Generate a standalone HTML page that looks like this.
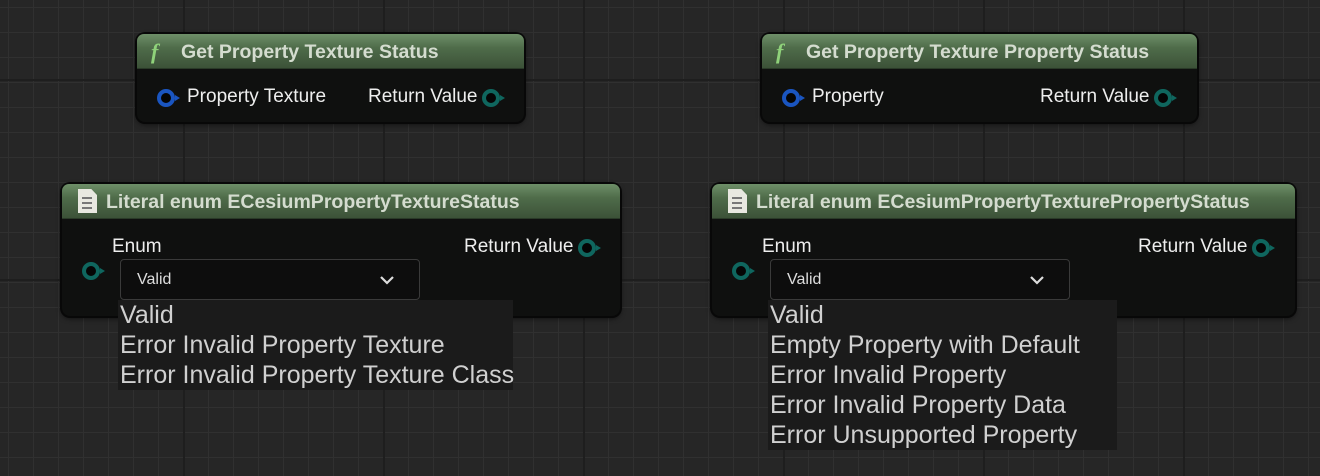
<!DOCTYPE html>
<html><head><meta charset="utf-8">
<style>
html,body{margin:0;padding:0}
body{width:1320px;height:476px;position:relative;overflow:hidden;
background-color:#262626;
background-image:
linear-gradient(#1e1e1e 2px,transparent 2px),
linear-gradient(90deg,#1e1e1e 2px,transparent 2px),
linear-gradient(#303030 1px,transparent 1px),
linear-gradient(90deg,#303030 1px,transparent 1px);
background-size:200px 200px,200px 200px,25px 25px,25px 25px;
background-position:0 79px,-17px 0,0 7px,8px 0;
font-family:"Liberation Sans",sans-serif;}
.node{position:absolute;background:#0f100f;border-radius:8px;box-shadow:0 0 0 2px #080808,0 2px 6px rgba(0,0,0,.7);overflow:visible}
.hdr{height:34px;border-radius:7px 7px 0 0;background:linear-gradient(180deg,#6e8f68 0%,#4f6c4a 40%,#3c5238 100%);border-bottom:1px solid #2a3a28;color:#d4dccf;font-weight:bold;font-size:19.5px;line-height:36px;white-space:nowrap;position:relative}
.lbl{position:absolute;color:#eee;font-size:19px;white-space:nowrap}
.pin{position:absolute;width:10px;height:10px;border-radius:50%;border:4px solid;box-sizing:content-box;background:#050505}
.pin:after{content:"";position:absolute;right:-9px;top:2px;border-left:5px solid;border-top:3px solid transparent;border-bottom:3px solid transparent;border-left-color:inherit}
.blue{border-color:#1a55c0}
.teal{border-color:#0f665e}
.f{font-family:"Liberation Serif",serif;font-style:italic;color:#8fd27a;font-size:22px;position:absolute;left:14px;top:0}
.doc{position:absolute;left:16px;top:5px;width:19px;height:24px;background:#e8e8e0;clip-path:polygon(0 0,70% 0,100% 25%,100% 100%,0 100%)}
.doc i{position:absolute;left:4px;height:2px;background:#777;width:10px}
.dd{position:absolute;border:1px solid #3a3a3a;border-radius:4px;background:#0d0d0d;color:#ddd;font-size:16px}
.list{position:absolute;background:#1b1b1b;color:#d0d0d0;font-size:25px;line-height:30px;white-space:nowrap;padding-left:2px}
</style></head><body>

<div class="node" style="left:137px;top:34px;width:387px;height:88px">
 <div class="hdr"><span class="f">f</span><span style="position:absolute;left:44px">Get Property Texture Status</span></div>
 <div class="pin blue" style="left:20px;top:55px"></div>
 <div class="lbl" style="left:50px;top:52px">Property Texture</div>
 <div class="lbl" style="left:231px;top:52px">Return Value</div>
 <div class="pin teal" style="left:345px;top:55px"></div>
</div>

<div class="node" style="left:762px;top:34px;width:435px;height:88px">
 <div class="hdr"><span class="f">f</span><span style="position:absolute;left:44px">Get Property Texture Property Status</span></div>
 <div class="pin blue" style="left:20px;top:55px"></div>
 <div class="lbl" style="left:50px;top:52px">Property</div>
 <div class="lbl" style="left:278px;top:52px">Return Value</div>
 <div class="pin teal" style="left:392px;top:55px"></div>
</div>

<div class="node" style="left:62px;top:184px;width:558px;height:132px">
 <div class="hdr"><div class="doc"><i style="top:8px"></i><i style="top:13px"></i><i style="top:18px"></i></div><span style="position:absolute;left:44px">Literal enum ECesiumPropertyTextureStatus</span></div>
 <div class="lbl" style="left:50px;top:52px">Enum</div>
 <div class="pin teal" style="left:20px;top:78px"></div>
 <div class="lbl" style="left:402px;top:52px">Return Value</div>
 <div class="pin teal" style="left:516px;top:55px"></div>
 <div class="dd" style="left:58px;top:75px;width:298px;height:39px"><span style="position:absolute;left:16px;top:11px">Valid</span>
 <svg style="position:absolute;left:258px;top:15px" width="16" height="10"><path d="M2 2 L8 8 L14 2" stroke="#ddd" stroke-width="2.2" fill="none"/></svg></div>
</div>

<div class="node" style="left:712px;top:184px;width:583px;height:132px">
 <div class="hdr"><div class="doc"><i style="top:8px"></i><i style="top:13px"></i><i style="top:18px"></i></div><span style="position:absolute;left:44px">Literal enum ECesiumPropertyTexturePropertyStatus</span></div>
 <div class="lbl" style="left:50px;top:52px">Enum</div>
 <div class="pin teal" style="left:20px;top:78px"></div>
 <div class="lbl" style="left:426px;top:52px">Return Value</div>
 <div class="pin teal" style="left:540px;top:55px"></div>
 <div class="dd" style="left:58px;top:75px;width:298px;height:39px"><span style="position:absolute;left:16px;top:11px">Valid</span>
 <svg style="position:absolute;left:258px;top:15px" width="16" height="10"><path d="M2 2 L8 8 L14 2" stroke="#ddd" stroke-width="2.2" fill="none"/></svg></div>
</div>

<div class="list" style="left:118px;top:300px;width:393px;height:90px">Valid<br>Error Invalid Property Texture<br>Error Invalid Property Texture Class</div>
<div class="list" style="left:768px;top:300px;width:347px;height:150px">Valid<br>Empty Property with Default<br>Error Invalid Property<br>Error Invalid Property Data<br>Error Unsupported Property</div>

</body></html>
